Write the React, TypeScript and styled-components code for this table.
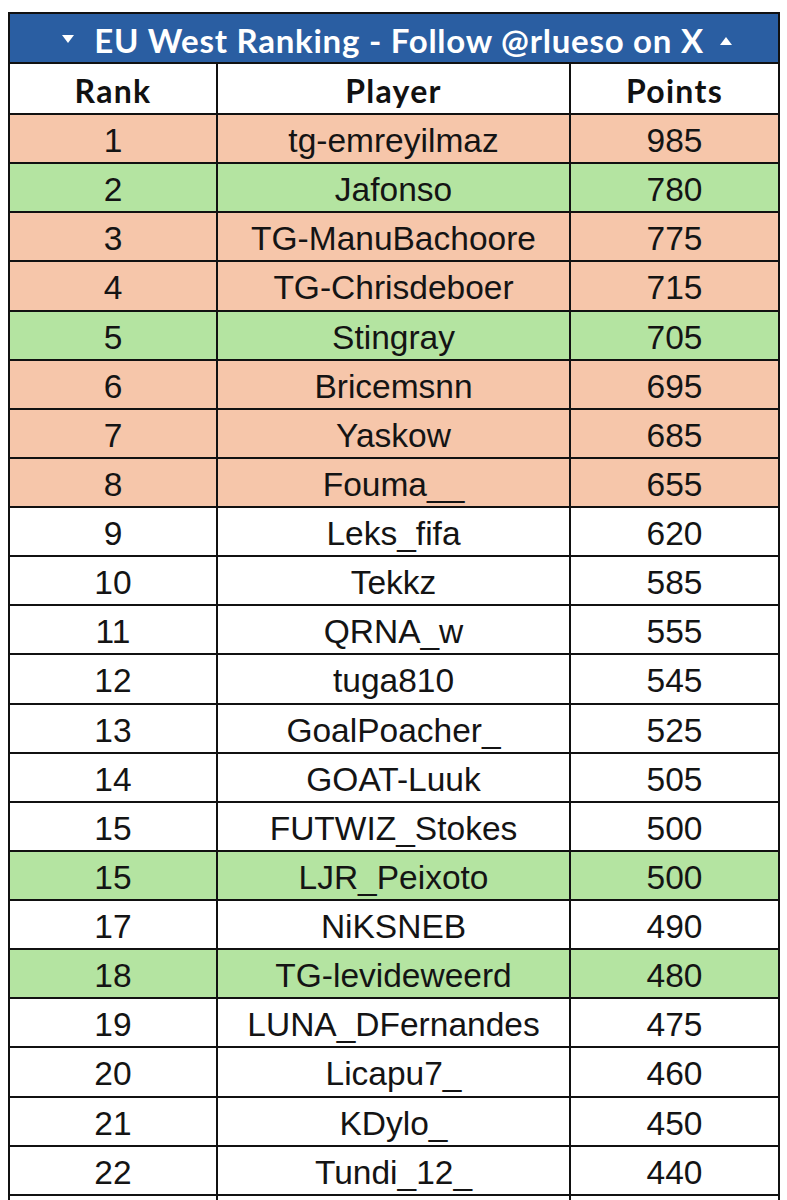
import React from 'react';
import styled, { createGlobalStyle } from 'styled-components';

const GlobalStyle = createGlobalStyle`
  html, body {
    margin: 0;
    padding: 0;
    background: #ffffff;
  }
  body {
    overflow: hidden;
  }
`;

const Page = styled.div`
  padding: 12px 0 0 8px;
  height: 1200px;
  box-sizing: border-box;
`;

const Table = styled.div`
  width: 772px;
  box-sizing: border-box;
  border: 2px solid #111;
  border-bottom: none;
  background: #111;
  display: grid;
  grid-template-columns: 206px 351px 1fr;
  column-gap: 2px;
  row-gap: 2px;
`;

const TitleBar = styled.div`
  grid-column: 1 / -1;
  height: 48px;
  background: #2a5ea2;
  color: #ffffff;
  display: flex;
  align-items: center;
  justify-content: center;
  padding: 4px 0 0 6px;
  box-sizing: border-box;
  font-family: Lato, 'Open Sans', sans-serif;
  font-weight: 700;
  font-size: 33px;
  letter-spacing: 0.75px;
`;

const TitleText = styled.span`
  margin: 0 16px 0 20px;
`;

const Arrow = styled.span<{ $up?: boolean }>`
  width: 0;
  height: 0;
  border-left: 6px solid transparent;
  border-right: 6px solid transparent;
  ${(p) =>
    p.$up
      ? 'border-bottom: 8px solid #ffffff; margin-top: 2px;'
      : 'border-top: 8px solid #ffffff; margin-top: -2px;'}
`;

const HeadCell = styled.div`
  height: 49px;
  background: #ffffff;
  display: flex;
  align-items: center;
  justify-content: center;
  padding-top: 4px;
  box-sizing: border-box;
  font-family: Lato, 'Open Sans', sans-serif;
  font-weight: 700;
  font-size: 32px;
  letter-spacing: 1.3px;
  color: #111;
`;

const Cell = styled.div<{ $tone: 'orange' | 'green' | 'plain' }>`
  height: 47.13px;
  background: ${(p) =>
    p.$tone === 'orange' ? '#f6c6aa' : p.$tone === 'green' ? '#b4e4a1' : '#ffffff'};
  display: flex;
  align-items: center;
  justify-content: center;
  padding-top: 5px;
  box-sizing: border-box;
  font-family: 'Liberation Sans', Arial, sans-serif;
  font-size: 33.5px;
  color: #141414;
  white-space: nowrap;
`;

type Tone = 'orange' | 'green' | 'plain';

interface Row {
  rank: string;
  player: string;
  points: string;
  tone: Tone;
}

const rows: Row[] = [
  { rank: '1', player: 'tg-emreyilmaz', points: '985', tone: 'orange' },
  { rank: '2', player: 'Jafonso', points: '780', tone: 'green' },
  { rank: '3', player: 'TG-ManuBachoore', points: '775', tone: 'orange' },
  { rank: '4', player: 'TG-Chrisdeboer', points: '715', tone: 'orange' },
  { rank: '5', player: 'Stingray', points: '705', tone: 'green' },
  { rank: '6', player: 'Bricemsnn', points: '695', tone: 'orange' },
  { rank: '7', player: 'Yaskow', points: '685', tone: 'orange' },
  { rank: '8', player: 'Fouma__', points: '655', tone: 'orange' },
  { rank: '9', player: 'Leks_fifa', points: '620', tone: 'plain' },
  { rank: '10', player: 'Tekkz', points: '585', tone: 'plain' },
  { rank: '11', player: 'QRNA_w', points: '555', tone: 'plain' },
  { rank: '12', player: 'tuga810', points: '545', tone: 'plain' },
  { rank: '13', player: 'GoalPoacher_', points: '525', tone: 'plain' },
  { rank: '14', player: 'GOAT-Luuk', points: '505', tone: 'plain' },
  { rank: '15', player: 'FUTWIZ_Stokes', points: '500', tone: 'plain' },
  { rank: '15', player: 'LJR_Peixoto', points: '500', tone: 'green' },
  { rank: '17', player: 'NiKSNEB', points: '490', tone: 'plain' },
  { rank: '18', player: 'TG-levideweerd', points: '480', tone: 'green' },
  { rank: '19', player: 'LUNA_DFernandes', points: '475', tone: 'plain' },
  { rank: '20', player: 'Licapu7_', points: '460', tone: 'plain' },
  { rank: '21', player: 'KDylo_', points: '450', tone: 'plain' },
  { rank: '22', player: 'Tundi_12_', points: '440', tone: 'plain' },
  { rank: '', player: '', points: '', tone: 'plain' },
];

const App: React.FC = () => {
  return (
    <Page>
      <GlobalStyle />
      <Table>
        <TitleBar>
          <Arrow />
          <TitleText>EU West Ranking - Follow @rlueso on X</TitleText>
          <Arrow $up />
        </TitleBar>
        <HeadCell>Rank</HeadCell>
        <HeadCell>Player</HeadCell>
        <HeadCell>Points</HeadCell>
        {rows.map((row, i) => (
          <React.Fragment key={i}>
            <Cell $tone={row.tone}>{row.rank}</Cell>
            <Cell $tone={row.tone}>{row.player}</Cell>
            <Cell $tone={row.tone}>{row.points}</Cell>
          </React.Fragment>
        ))}
      </Table>
    </Page>
  );
};

export default App;
